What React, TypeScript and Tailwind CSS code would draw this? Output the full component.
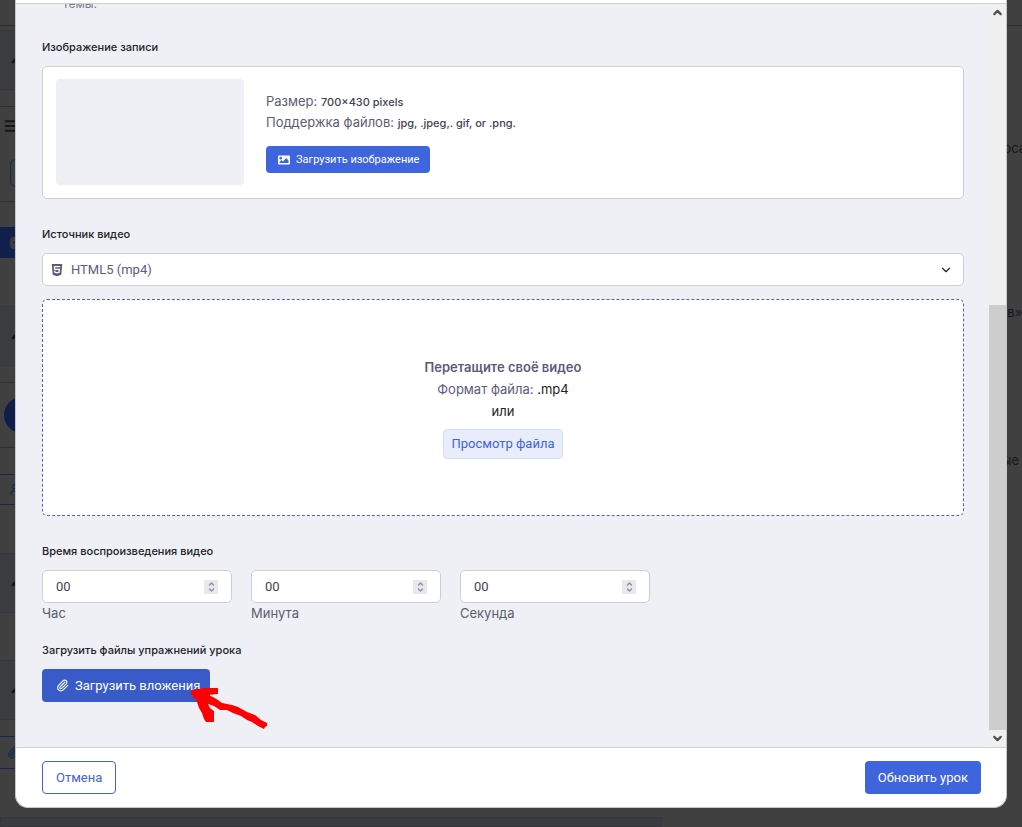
import { ReactNode } from "react";
import { ChevronDown, ChevronUp, Menu, Paperclip, UserPlus } from "lucide-react";
import { FaHtml5, FaImage } from "react-icons/fa";

const heading = "block text-[11px] leading-4 font-medium text-[#212327]";

function PageBehind() {
  return (
    <div aria-hidden="true" className="flex h-full overflow-hidden">
      <div className="flex w-[662px] shrink-0 flex-col">
        <div className="h-[26px] shrink-0 border-b border-[#2d2d2f]" />
        <Topic className="mt-1 h-[60px]" />
        <div className="h-[17px] shrink-0 border-b border-[#2f3032]" />
        <div className="flex h-[52px] shrink-0 items-start pt-[11px] pl-[3px]">
          <Menu size={16} strokeWidth={3} className="text-[#16171b]" />
        </div>
        <div className="ml-[10px] h-7 w-24 shrink-0 rounded-md border border-[#162654]" />
        <div className="h-[15px] shrink-0 border-b border-[#2f3032]" />
        <div className="mt-[25px] flex h-[31px] shrink-0 items-center bg-[#131f4b] pl-[10px]">
          <div className="flex h-3 w-4 items-center rounded-sm bg-[#3b3c40] pl-[3px]">
            <div className="h-px w-2 bg-[#131f4b]" />
          </div>
        </div>
        <Topic className="mt-12 h-[60px]" />
        <div className="h-[17px] shrink-0 border-b border-[#2f3032]" />
        <div className="mt-[14px] ml-1 size-9 shrink-0 rounded-full bg-[#101d4a]" />
        <div className="h-[15px] shrink-0 border-b border-[#2f3032]" />
        <div className="mt-[26px] flex h-[31px] shrink-0 items-center border-y border-[#162654] pl-[10px]">
          <UserPlus size={13} className="text-[#162654]" />
        </div>
        <Topic className="mt-12 h-[60px]" />
        <Topic className="mt-[47px] h-[60px]" />
        <div className="mt-4 flex h-[33px] shrink-0 items-center border-y border-[#162654] pl-[7px]">
          <Paperclip size={13} className="text-[#162654]" />
        </div>
        <div className="mt-12 grow border border-[#36373a] bg-[#3b3c40]" />
      </div>
      <div className="flex min-w-0 grow flex-col items-end text-[13px] leading-5 text-[#16171b]">
        <div className="h-[26px] w-full shrink-0 border-b border-[#2d2d2f]" />
        <p className="mt-[112px] -mr-1">рса</p>
        <p className="mt-[144px] -mr-1">в»,</p>
        <p className="mt-32 pr-[3px]">ые</p>
      </div>
    </div>
  );
}

function Topic({ className }: { className: string }) {
  return (
    <div className={`${className} flex shrink-0 items-center border-y border-[#36373a] bg-[#3b3c40] pl-[9px]`}>
      <ChevronUp size={16} strokeWidth={4} className="text-[#121316]" />
    </div>
  );
}

function TimeField({ id, label }: { id: string; label: string }) {
  return (
    <div className="w-[190px]">
      <div className="relative">
        <input
          id={id}
          type="number"
          defaultValue="00"
          className="block h-[33px] w-full appearance-none rounded-[5px] border border-[#cdcfd5] bg-white px-[13px] font-[Roboto,sans-serif] text-[13px] text-[#41454f] outline-none [appearance:textfield]"
        />
        <span aria-hidden="true" className="pointer-events-none absolute top-[10px] right-[14px] flex h-[14px] w-[14px] flex-col items-center justify-center bg-[#e8e9ee] text-[#8b8d98]">
          <ChevronUp size={9} strokeWidth={4} className="-mb-px" />
          <ChevronDown size={9} strokeWidth={4} className="-mt-px" />
        </span>
      </div>
      <label htmlFor={id} className="block text-[13px] leading-5 text-[#5b5e6e]">
        {label}
      </label>
    </div>
  );
}

function PrimaryButton({ className, children }: { className: string; children: ReactNode }) {
  return (
    <button type="button" className={`${className} flex items-center rounded font-[Roboto,sans-serif] text-white`}>
      {children}
    </button>
  );
}

function Scrollbar() {
  return (
    <div aria-hidden="true" className="flex w-[17px] shrink-0 flex-col bg-[#f0f0f0] text-[#505050]">
      <div className="flex h-[17px] items-center justify-center">
        <ChevronUp size={13} strokeWidth={4} />
      </div>
      <div className="flex grow flex-col justify-end">
        <div className="h-3/5 bg-[#cdcdcd]" />
      </div>
      <div className="flex h-[17px] items-center justify-center">
        <ChevronDown size={13} strokeWidth={4} />
      </div>
    </div>
  );
}

function HandArrow() {
  return (
    <svg aria-hidden="true" viewBox="0 0 78 44" className="pointer-events-none absolute top-[17px] left-[149px] h-11 w-[78px] fill-[#fe0000]">
      <path d="M0 5L4 3L9 3L13 2H27V8L17 9L22 11L27 14L31 17L41 19L47 21L56 26L64 29L70 34L76 37V40L74 41L73 43L67 40L61 36L56 34L50 30L42 27L36 24L29 24L23 20L17 18L19 22L23 25V36H15L13 33L11 27L8 22L6 16L5 13L2 12V9H0Z" />
    </svg>
  );
}

export default function App() {
  return (
    <div className="relative h-screen overflow-hidden bg-[#404040] font-[Inter,'Liberation_Sans',sans-serif]">
      <PageBehind />
      <div
        role="dialog"
        aria-label="Урок"
        className="absolute inset-x-[15px] top-0 bottom-[19px] flex flex-col overflow-hidden rounded-b-[13px] border-x border-b border-[#c5c7cd] bg-white"
      >
        <div className="h-1 shrink-0 border-b border-[#cdcfd5]" />
        <div className="flex min-h-0 grow">
          <form id="lesson" className="flex min-w-0 grow flex-col justify-end overflow-hidden bg-[#eff0f6] pr-[25px] pb-[45px] pl-[26px]">
            <p className="pl-[21px] text-xs leading-4 text-[#757c8e]">темы.</p>

            <h3 className={`${heading} mt-[27px]`}>Изображение записи</h3>
            <div className="mt-[11px] flex items-center gap-[22px] rounded-[5px] border border-[#cdcfd5] bg-white px-[13px] pt-3 pb-[13px]">
              <div className="h-[106px] w-[188px] shrink-0 rounded-sm bg-[#eff0f6]" />
              <div className="text-[13px] leading-5 text-[#5b5e6e]">
                <p>
                  Размер: <span className="text-[11px] font-medium text-[#41454f]">700×430 pixels</span>
                </p>
                <p>
                  Поддержка файлов: <span className="text-[11px] font-medium text-[#41454f]">jpg, .jpeg,. gif, or .png.</span>
                </p>
                <PrimaryButton className="mt-[13px] h-[27px] gap-[6px] bg-[#3e64de] pr-[11px] pl-3 text-[11px]">
                  <FaImage size={12} />
                  Загрузить изображение
                </PrimaryButton>
              </div>
            </div>

            <label htmlFor="source" className={`${heading} mt-[27px]`}>
              Источник видео
            </label>
            <div className="relative mt-[11px]">
              <select
                id="source"
                className="block h-[33px] w-full appearance-none rounded-[5px] border border-[#cdcfd5] bg-white px-7 font-[Roboto,sans-serif] text-[13px] text-[#5b5b7b] outline-none"
              >
                <option>HTML5 (mp4)</option>
              </select>
              <FaHtml5 aria-hidden="true" size={14} className="pointer-events-none absolute top-[10px] left-2 text-[#5b5b7b]" />
              <ChevronDown aria-hidden="true" size={14} className="pointer-events-none absolute top-[10px] right-[11px] text-[#212327]" />
            </div>

            <div className="mt-[13px] flex h-[217px] shrink-0 flex-col items-center justify-center rounded-[5px] border border-dashed border-[#3e64de] bg-white text-[13px] leading-[22px] text-[#212327]">
              <p className="font-semibold text-[#5b5b7b]">Перетащите своё видео</p>
              <p>
                <span className="text-[#5b5b7b]">Формат файла:</span> .mp4
              </p>
              <p>или</p>
              <button
                type="button"
                className="mt-[7px] h-[30px] rounded border border-[#d6dff8] bg-[#e9edfb] px-[7px] font-[Roboto,sans-serif] text-[13px] text-[#3e64de]"
              >
                Просмотр файла
              </button>
            </div>

            <h3 className={`${heading} mt-[27px]`}>Время воспроизведения видео</h3>
            <div className="mt-[11px] flex gap-[19px]">
              <TimeField id="hours" label="Час" />
              <TimeField id="minutes" label="Минута" />
              <TimeField id="seconds" label="Секунда" />
            </div>

            <h3 className={`${heading} mt-[19px]`}>Загрузить файлы упражнений урока</h3>
            <div className="relative mt-[11px] flex">
              <PrimaryButton className="h-[33px] gap-[6px] bg-[#395bca] pr-[10px] pl-[14px] text-[13px]">
                <Paperclip size={13} />
                Загрузить вложения
              </PrimaryButton>
              <HandArrow />
            </div>
          </form>
          <Scrollbar />
        </div>
        <div className="flex shrink-0 justify-between border-t border-[#cdcfd5] py-[13px] pr-[25px] pl-[26px]">
          <button type="button" className="h-[33px] rounded border border-[#3e64de] px-[13px] font-[Roboto,sans-serif] text-[13px] text-[#3e64de]">
            Отмена
          </button>
          <PrimaryButton className="h-[33px] bg-[#3e64de] px-[13px] text-[13px]">Обновить урок</PrimaryButton>
        </div>
      </div>
    </div>
  );
}
